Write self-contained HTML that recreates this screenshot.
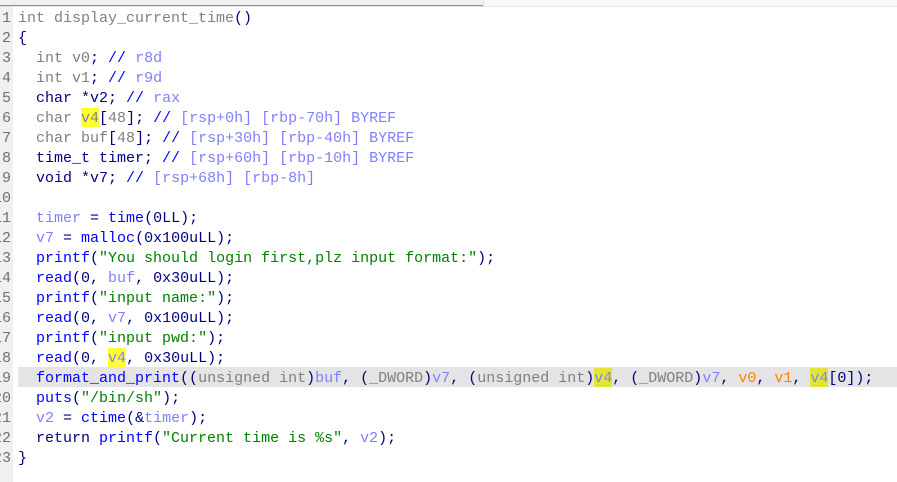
<!DOCTYPE html>
<html><head><meta charset="utf-8"><style>
html,body{margin:0;padding:0;background:#fff}
#p{position:relative;width:897px;height:482px;overflow:hidden;background:#fff;font:15px/20px "Liberation Mono",monospace;color:#000080}
#tr{position:absolute;left:0;top:0;width:897px;height:6px;background:#f8f8f8;border-bottom:1px solid #e6e6e6}
#tl{position:absolute;left:0;top:0;width:483px;height:5px;background:#f0f0f0;border-bottom:1px solid #8c8c8c}
#tc{position:absolute;left:483px;top:0;width:1px;height:6px;background:#e0e0e0}
#g{position:absolute;left:0;top:7px;width:13px;height:475px;background:#f0f0f0;overflow:hidden}
#g div{position:absolute;right:2px;margin-top:2px;color:#707070;height:20px;white-space:pre}
.l{position:absolute;left:18px;margin-top:2px;height:20px;white-space:pre}
#b{position:absolute;left:18px;top:367px;width:879px;height:20px;background:#e4e4e4}
.h{position:absolute;width:18px;height:19px;background:#ffff33}
.h.k{background:#e4e433}
.g{color:#808080}.f{color:#0000ff}.v{color:#8080ff}.s{color:#008000}.o{color:#ff8000}
</style></head><body><div id="p">
<div id="tr"></div><div id="tl"></div><div id="tc"></div>
<div id="g">
<div style="top:0">1</div><div style="top:20px">2</div><div style="top:40px">3</div><div style="top:60px">4</div><div style="top:80px">5</div><div style="top:100px">6</div><div style="top:120px">7</div><div style="top:140px">8</div><div style="top:160px">9</div><div style="top:180px">10</div><div style="top:200px">11</div><div style="top:220px">12</div><div style="top:240px">13</div><div style="top:260px">14</div><div style="top:280px">15</div><div style="top:300px">16</div><div style="top:320px">17</div><div style="top:340px">18</div><div style="top:360px">19</div><div style="top:380px">20</div><div style="top:400px">21</div><div style="top:420px">22</div><div style="top:440px">23</div>
</div>
<div id="b"></div>
<div class="h" style="left:81px;top:108px"></div>
<div class="h" style="left:108px;top:348px"></div>
<div class="h k" style="left:594px;top:368px"></div>
<div class="h k" style="left:810px;top:368px"></div>
<div class="l" style="top:7px"><span class="g">int display_current_time</span>()</div>
<div class="l" style="top:27px">{</div>
<div class="l" style="top:47px">  <span class="g">int v0</span>; <span class="f">//</span> <span class="v">r8d</span></div>
<div class="l" style="top:67px">  <span class="g">int v1</span>; <span class="f">//</span> <span class="v">r9d</span></div>
<div class="l" style="top:87px">  char *v2; <span class="f">//</span> <span class="v">rax</span></div>
<div class="l" style="top:107px">  <span class="g">char v4</span>[<span class="g">48</span>]; <span class="f">//</span> <span class="v">[rsp+0h] [rbp-70h] BYREF</span></div>
<div class="l" style="top:127px">  <span class="g">char buf</span>[<span class="g">48</span>]; <span class="f">//</span> <span class="v">[rsp+30h] [rbp-40h] BYREF</span></div>
<div class="l" style="top:147px">  time_t timer; <span class="f">//</span> <span class="v">[rsp+60h] [rbp-10h] BYREF</span></div>
<div class="l" style="top:167px">  void *v7; <span class="f">//</span> <span class="v">[rsp+68h] [rbp-8h]</span></div>
<div class="l" style="top:207px">  <span class="v">timer</span> = <span class="f">time</span>(0LL);</div>
<div class="l" style="top:227px">  <span class="v">v7</span> = <span class="f">malloc</span>(0x100uLL);</div>
<div class="l" style="top:247px">  <span class="f">printf</span>(<span class="s">"You should login first,plz input format:"</span>);</div>
<div class="l" style="top:267px">  <span class="f">read</span>(0, <span class="v">buf</span>, 0x30uLL);</div>
<div class="l" style="top:287px">  <span class="f">printf</span>(<span class="s">"input name:"</span>);</div>
<div class="l" style="top:307px">  <span class="f">read</span>(0, <span class="v">v7</span>, 0x100uLL);</div>
<div class="l" style="top:327px">  <span class="f">printf</span>(<span class="s">"input pwd:"</span>);</div>
<div class="l" style="top:347px">  <span class="f">read</span>(0, <span class="v">v4</span>, 0x30uLL);</div>
<div class="l" style="top:367px">  <span class="f">format_and_print</span>((<span class="g">unsigned int</span>)<span class="v">buf</span>, (<span class="g">_DWORD</span>)<span class="v">v7</span>, (<span class="g">unsigned int</span>)<span class="v">v4</span>, (<span class="g">_DWORD</span>)<span class="v">v7</span>, <span class="o">v0</span>, <span class="o">v1</span>, <span class="v">v4</span>[0]);</div>
<div class="l" style="top:387px">  <span class="f">puts</span>(<span class="s">"/bin/sh"</span>);</div>
<div class="l" style="top:407px">  <span class="v">v2</span> = <span class="f">ctime</span>(&amp;<span class="v">timer</span>);</div>
<div class="l" style="top:427px">  return <span class="f">printf</span>(<span class="s">"Current time is %s"</span>, <span class="v">v2</span>);</div>
<div class="l" style="top:447px">}</div>
</div></body></html>
